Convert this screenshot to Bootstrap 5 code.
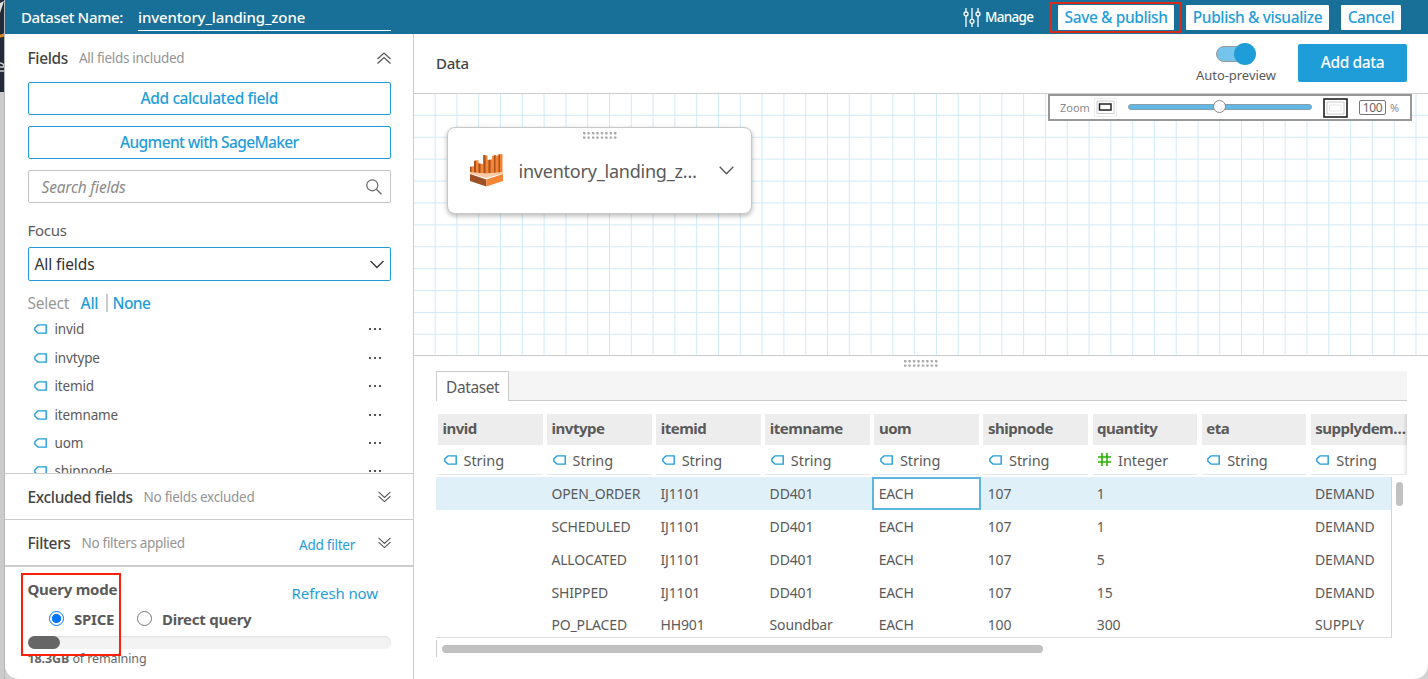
<!DOCTYPE html>
<html lang="en">
<head>
<meta charset="utf-8">
<meta name="viewport" content="width=device-width, initial-scale=1">
<title>Dataset</title>
<link href="https://cdn.jsdelivr.net/npm/bootstrap@5.3.0/dist/css/bootstrap.min.css" rel="stylesheet">
<style>
  :root { --blue: #1f9dd9; --line: #ccc; --ink: #444; --soft: #949494; }
  body { font-family: "Noto Sans", "Open Sans", sans-serif; font-size: 16px; line-height: 20px; letter-spacing: -.25px; color: #5a5a5a; background: #d2d2d2; height: 679px; overflow: hidden; }
  svg { display: block; flex: none; }
  .backdrop { width: 5px; height: 679px; background: #cbcbcb; overflow: hidden; border-right: 1px solid #b9b9b9; }
  .backdrop-top { height: 92px; background: #212a38; }
  .app { width: 1423px; height: 679px; background: #fff; border-radius: 0 0 14px 14px; overflow: hidden; }
  .topbar { height: 34px; background: #186f98; color: #fff; font-weight: 500; font-size: 15px; letter-spacing: -.35px; }
  .ds-name { width: 253px; height: 24px; border-bottom: 1px solid #fff; line-height: 21px; letter-spacing: -.13px; }
  .btn-top { height: 25px; background: #fff; color: var(--blue); border: 0; border-radius: 1px; padding: 0; font-size: 15.5px; font-weight: 500; line-height: 24px; letter-spacing: -.4px; }
  .btn-top:hover { background: #fff; color: var(--blue); }
  .marker { position: absolute; border: 2px solid #fb2009; pointer-events: none; }
  .side { width: 409px; border-right: 1px solid var(--line); }
  .sec { padding: 0 22px 0 22.5px; }
  .ttl { color: var(--ink); font-size: 15.5px; font-weight: 500; letter-spacing: -.35px; }
  .hint { color: var(--soft); font-size: 13.5px; letter-spacing: -.3px; margin-left: 11px; }
  .lnk { color: var(--blue); text-decoration: none; font-weight: 500; }
  .btn-line { height: 33px; border: 1px solid var(--blue); border-radius: 2px; color: var(--blue); padding: 0; font-size: 15.5px; font-weight: 500; line-height: 31px; letter-spacing: -.4px; }
  .btn-line.tight { letter-spacing: -.62px; }
  .box { height: 33px; border: 1px solid #c4c4c4; border-radius: 2px; }
  .field-list { height: 158px; overflow: hidden; }
  .field { height: 28.45px; font-size: 13.5px; letter-spacing: -.15px; }
  .dots { width: 13px; height: 2px; background: radial-gradient(circle at 1px 1px, #555 1px, transparent 1.3px) 0 0/5px 2px; }
  .bar-line { border-top: 1px solid var(--line); }
  .meter { height: 13px; border-radius: 7px; background: #f3f3f3; box-shadow: inset 0 1px 2px #ddd; }
  .meter-fill { height: 13px; border-radius: 7px; background: #666; }
  .radio { width: 15px; height: 15px; border-radius: 50%; border: 1px solid #777; background: #fff; }
  .radio.on { border: 1.5px solid #0075ff; background: radial-gradient(circle, #0075ff 4.2px, #fff 4.9px); }
  .data-head { height: 60px; border-bottom: 1px solid var(--line); }
  .switch-track { position: relative; width: 40px; height: 22px; }
  .switch-track::before { content: ""; position: absolute; left: 0; top: 3px; width: 36px; height: 16px; border-radius: 8px; border: 1px solid #989898; background: #74c4ec; }
  .switch-track::after { content: ""; position: absolute; right: 0; top: 0; width: 22px; height: 22px; border-radius: 50%; background: #1f9dd9; }
  .btn-add { width: 109px; height: 38px; background: #1f9dd9; color: #fff; border: 0; border-radius: 2px; font-weight: 500; padding: 0; font-size: 15.5px; letter-spacing: -.4px; }
  .canvas { position: relative; height: 262px; border-bottom: 1px solid var(--line);
    background: linear-gradient(to right, transparent 20.8px, #cfeaf8 20.8px) -.2px 0/21.8px 21.9px, linear-gradient(transparent 20.9px, #cfeaf8 20.9px) 0 0/21.8px 21.9px, #fff; }
  .zoombox { position: absolute; left: 634px; top: 0; width: 364px; height: 27px; border: 2px solid #979797; background: #fff; color: #8b8b8b; font-size: 11px; letter-spacing: 0; }
  .zslider { position: relative; width: 184px; height: 6px; border-radius: 3px; background: #5fb8e6; border: 1px solid #8a9da6; }
  .zslider::after { content: ""; position: absolute; left: 84px; top: -5px; width: 13px; height: 13px; border-radius: 50%; border: 1px solid #888; background: #fff; }
  .zval { width: 27px; height: 15px; border: 1px solid #777; border-radius: 2px; font-size: 12px; line-height: 14px; color: #666; text-align: center; letter-spacing: -.3px; }
  .node { position: absolute; left: 33px; top: 33px; width: 305px; height: 87px; border: 1px solid #c8c8c8; border-radius: 8px; background: #fff; box-shadow: 0 2px 5px rgba(0,0,0,.28); }
  .grip { width: 34px; height: 7px; background: radial-gradient(circle at 1.2px 1.2px, #a8a8a8 1.1px, transparent 1.4px) 0 0/4.45px 4.5px; }
  .node-name { font-size: 18px; letter-spacing: -.22px; }
  .tabs { height: 30px; background: #f5f5f5; border-bottom: 1px solid var(--line); margin: 0 21px 0 22px; }
  .tab-on { width: 73px; height: 30px; background: #fff; border: 1px solid var(--line); border-bottom: 0; line-height: 30px; letter-spacing: -.4px; font-size: 15.5px; padding-left: 9px; }
  .grid-head { margin: 13px 21px 0 24px; width: 969px; height: 61px; overflow: hidden; position: relative; }
  .grid-head::after { content: ""; position: absolute; right: 0; top: 0; width: 4px; height: 60px; background: linear-gradient(to right, transparent, rgba(0,0,0,.1)); }
  .cols { display: grid; grid-template-columns: repeat(9, 104.6px); column-gap: 4.5px; }
  .th-name { height: 31px; background: #ededed; padding-left: 4.5px; line-height: 28px; font-weight: 700; font-size: 15px; letter-spacing: -.48px; white-space: nowrap; }
  .th-type { height: 30px; border-bottom: 1px solid #e8e8e8; padding-left: 5.5px; font-size: 14.5px; letter-spacing: -.05px; }
  .rows { margin: 2px 0 0 22px; width: 956px; height: 161px; border-right: 1px solid #d5d5d5; border-bottom: 1px solid #ddd; overflow: hidden; }
  .dr { height: 32.8px; padding-left: 2px; font-size: 14px; letter-spacing: -.15px; }
  .dr > div { padding-left: 4.3px; line-height: 33px; white-space: nowrap; }
  .dr.sel { background: #e0f0f9; height: 33px; }
  .dr.sel > .cell-on { outline: 2px solid #5bb5e0; outline-offset: -2px; background: #fff; margin: 0 -2px; padding-left: 6.3px; }
</style>
</head>
<body>
<div class="d-flex">
  <div class="backdrop">
    <div class="backdrop-top">
      <svg width="5" height="92"><path d="M0 3L4 1 0 13z" fill="#ddd"/><path d="M0 36Q3 36 5 34" stroke="#e08a1e" stroke-width="3" fill="none"/><path d="M0 67h4M4 67q0-4-4-4M0 71h4" stroke="#ccc" stroke-width="1.5" fill="none"/></svg>
    </div>
  </div>
  <div class="app d-flex flex-column position-relative">
    <header class="topbar d-flex align-items-center">
      <div style="margin-left:16px;width:117px">Dataset Name:</div>
      <div class="ds-name mt-1">inventory_landing_zone</div>
      <div class="ms-auto d-flex align-items-center">
        <svg width="18" height="19" viewBox="0 0 18 19" fill="none" stroke="#fff" stroke-width="1.3"><path d="M3 0v4M3 8v11M9 0v11M9 15.500v3.500M15 0v4M15 8v11"/><circle cx="3" cy="6" r="2"/><circle cx="9" cy="13.300" r="2"/><circle cx="15" cy="6" r="2"/></svg>
        <span style="margin-left:4px;width:73px;font-size:13.500px;letter-spacing:-.7px">Manage</span>
        <button class="btn btn-top" style="width:116px;margin-right:12px">Save &amp; publish</button>
        <button class="btn btn-top" style="width:143px;margin-right:12px">Publish &amp; visualize</button>
        <button class="btn btn-top" style="width:60px;margin-right:27px">Cancel</button>
      </div>
    </header>
    <div class="d-flex flex-grow-1">
      <aside class="side">
        <div class="sec">
          <div class="d-flex align-items-center" style="height:48px">
            <span class="ttl">Fields</span><span class="hint">All fields included</span>
            <svg class="ms-auto" width="14" height="12" viewBox="0 0 14 12" fill="none" stroke="#555" stroke-width="1.2"><path d="M.5 7L7 1l6.500 6M.5 11.500L7 5.500l6.500 6"/></svg>
          </div>
          <button class="btn btn-line w-100 d-block">Add calculated field</button>
          <button class="btn btn-line tight w-100 d-block" style="margin-top:11px">Augment with SageMaker</button>
          <div class="box d-flex align-items-center" style="margin-top:11px;padding:0 8px 0 13px">
            <span class="fst-italic" style="color:#8b8b8b;font-size:15.500px;letter-spacing:-.2px">Search fields</span>
            <svg class="ms-auto" width="16" height="16" viewBox="0 0 16 16" fill="none" stroke="#666" stroke-width="1.200"><circle cx="6.300" cy="6.300" r="5.500"/><path d="M10.300 10.300L15.500 15.300"/></svg>
          </div>
          <div style="margin-top:17px;font-size:15px">Focus</div>
          <div class="box d-flex align-items-center" style="margin-top:7px;height:34px;border-color:var(--blue);padding:0 6px;color:#333;font-size:15.5px">
            <span style="letter-spacing:-.1px">All fields</span>
            <svg class="ms-auto" width="14" height="9" viewBox="0 0 14 9" fill="none" stroke="#333" stroke-width="1.300"><path d="M.5 1L7 7.500 13.500 1"/></svg>
          </div>
          <div class="d-flex align-items-center" style="margin-top:12px;height:20px;font-size:15.5px">
            <span style="color:#999;width:53px">Select</span><a class="lnk" href="#" style="width:25px">All</a><span style="width:7px;height:18px;border-left:2px solid #ccc"></span><a class="lnk" href="#" style="letter-spacing:-.6px">None</a>
          </div>
          <div class="field-list" id="fields" style="margin-top:2px"></div>
        </div>
        <div class="sec bar-line d-flex align-items-center" style="height:46px">
          <span class="ttl">Excluded fields</span><span class="hint">No fields excluded</span>
          <svg class="ms-auto" width="13" height="11" viewBox="0 0 14 12" fill="none" stroke="#555" stroke-width="1.2"><path d="M.5 1L7 7l6.500-6M.5 5.500L7 11.500l6.500-6"/></svg>
        </div>
        <div class="sec bar-line d-flex align-items-center" style="height:46px">
          <span class="ttl">Filters</span><span class="hint">No filters applied</span>
          <a class="lnk ms-auto" href="#" style="font-size:13.500px;margin-right:23px;padding-top:4px;font-weight:400">Add filter</a>
          <svg width="13" height="11" viewBox="0 0 14 12" fill="none" stroke="#555" stroke-width="1.2"><path d="M.5 1L7 7l6.500-6M.5 5.500L7 11.500l6.500-6"/></svg>
        </div>
        <div class="sec" style="border-top:2px solid #ccc;padding-top:12px">
          <div class="d-flex fw-bold" style="font-size:15px"><span>Query mode</span><a class="lnk ms-auto" href="#" style="font-weight:400;margin:4px 13px 0 0;font-size:15px;letter-spacing:-.1px">Refresh now</a></div>
          <div class="d-flex align-items-center fw-bold" style="margin-top:4px;height:22px;padding-left:21.500px;font-size:15px">
            <span class="radio on"></span><span style="margin-left:10px;width:63px;padding-top:2px">SPICE</span>
            <span class="radio"></span><span style="margin-left:10px;padding-top:2px">Direct query</span>
          </div>
          <div class="meter" style="margin-top:7px"><div class="meter-fill" style="width:9%"></div></div>
          <div style="font-size:12.500px;line-height:19px;letter-spacing:-.1px;color:#666"><b>18.3GB</b> of remaining</div>
        </div>
      </aside>
      <main class="flex-grow-1">
        <div class="data-head d-flex align-items-center">
          <span style="margin-left:22px;color:#444;font-weight:500;font-size:15px;margin-top:-1px">Data</span>
          <div class="ms-auto d-flex flex-column align-items-center" style="width:84px;margin-right:20px;padding-top:2px">
            <div class="switch-track"></div><div style="font-size:13px;letter-spacing:-.05px;line-height:21px">Auto-preview</div>
          </div>
          <button class="btn btn-add" style="margin:-1px 21px 0 0">Add data</button>
        </div>
        <div class="canvas">
          <div class="node">
            <div class="d-flex justify-content-center" style="padding-top:4px"><div class="grip"></div></div>
            <div class="d-flex align-items-center" style="padding:13px 17px 0 22px;height:50px">
              <svg width="33" height="33" viewBox="0 0 33 33"><path d="M0 13l4-1V7l4.500-1v3l4.500 1V1l4.500.5V6l4.500-.5V2l4-1 .5 1L29 .5l3.500-.5v19l-16.500 1L0 19z" fill="#f58534"/><path d="M0 13l1.500-.5V19H0zM4 7l2-.5V19H4zM8.500 9.500l2 .5v9.500h-2zM13.500 1l2 .5v18h-2zM18.500 6l2-.5V19h-2zM24 1.500l1.500-.5V19H24zM28.500.5L30 .3V19h-1.500z" fill="#a7501f"/><path d="M0 19.500L16.300 24 33 19.500V18l-16.700 1.500L0 18z" fill="#fbc9a4"/><path d="M0 20l16.300 5.500V32.500L0 27z" fill="#9d5025"/><path d="M33 20l-16.700 5.500V32.500L33 27z" fill="#f58534"/></svg>
              <span class="node-name" style="margin-left:15.500px">inventory_landing_z…</span>
              <svg class="ms-auto" width="15" height="9" viewBox="0 0 15 9" fill="none" stroke="#555" stroke-width="1.300"><path d="M.7.8l6.800 7 6.800-7"/></svg>
            </div>
          </div>
          <div class="zoombox d-flex align-items-center">
            <span style="margin-left:10px;width:34px">Zoom</span>
            <svg width="23" height="19" viewBox="0 0 23 19" fill="none"><path d="M.5.500h22v18H.5z" stroke="#eee"/><path d="M3 3h17v12.500H3z" stroke="#ccc"/><path d="M5.500 6h11.500v6H5.500z" stroke="#222" stroke-width="1.500"/></svg>
            <div class="zslider" style="margin-left:11px;margin-bottom:1px"></div>
            <svg style="margin-left:11px" width="25" height="20" viewBox="0 0 25 20" fill="none"><path d="M1 1h23v18H1z" stroke="#111" stroke-width="1.500"/><path d="M4 4h17v12H4z" stroke="#ccc"/><path d="M6.500 7h11.500v6H6.500z" stroke="#e5e5e5"/></svg>
            <span class="zval" style="margin-left:11px">100</span><span style="margin-left:4px">%</span>
          </div>
        </div>
        <div class="d-flex justify-content-center" style="padding-top:4px;height:15px"><div class="grip"></div></div>
        <div class="tabs"><div class="tab-on">Dataset</div></div>
        <div class="grid-head"><div class="cols" id="head"></div></div>
        <div class="rows" id="rows"></div>
        <div style="margin:2px 0 0 22px;padding:5px 0 0 5px;height:17px;border-left:1px solid #ccc"><div style="width:601px;height:8px;border-radius:4px;background:#c1c1c1"></div></div>
      </main>
    </div>
    <div style="position:absolute;left:1391px;top:482px;width:7px;height:24px;border-radius:4px;background:#c1c1c1"></div>
    <div class="marker" style="left:16px;top:573px;width:100px;height:83px"></div>
    <div class="marker" style="left:1045px;top:2px;width:131px;height:31px;border-color:#d92b17"></div>
  </div>
</div>
<script>
  const tag = '<svg width="13" height="10" viewBox="0 0 13 10" fill="none" stroke="#1f9dd9" stroke-width="1.4"><path d="M4 .900h8.200v8.200H4L.900 6.300V3.700z"/></svg>';
  const hash = '<svg width="13" height="13" viewBox="0 0 13 13" fill="none" stroke="#2bb000" stroke-width="1.600"><path d="M4 0v13M9 0v13M0 4h13M0 9h13"/></svg>';
  document.getElementById('fields').innerHTML = ['invid', 'invtype', 'itemid', 'itemname', 'uom', 'shipnode'].map(n =>
    `<div class="field d-flex align-items-center" style="padding:0 9px 0 6px">${tag}<span style="margin-left:8px">${n}</span><span class="dots ms-auto"></span></div>`).join('');
  const cols = ['invid', 'invtype', 'itemid', 'itemname', 'uom', 'shipnode', 'quantity', 'eta', 'supplydem…'];
  document.getElementById('head').innerHTML = cols.map(c =>
    `<div><div class="th-name">${c}</div><div class="th-type d-flex align-items-center">${c === 'quantity' ? hash : tag}<span style="margin-left:7px">${c === 'quantity' ? 'Integer' : 'String'}</span></div></div>`).join('');
  const data = [
    ['', 'OPEN_ORDER', 'IJ1101', 'DD401', 'EACH', '107', '1', '', 'DEMAND'],
    ['', 'SCHEDULED', 'IJ1101', 'DD401', 'EACH', '107', '1', '', 'DEMAND'],
    ['', 'ALLOCATED', 'IJ1101', 'DD401', 'EACH', '107', '5', '', 'DEMAND'],
    ['', 'SHIPPED', 'IJ1101', 'DD401', 'EACH', '107', '15', '', 'DEMAND'],
    ['', 'PO_PLACED', 'HH901', 'Soundbar', 'EACH', '100', '300', '', 'SUPPLY']];
  document.getElementById('rows').innerHTML = data.map((r, i) =>
    `<div class="dr cols ${i ? '' : 'sel'}">${r.map((v, j) => `<div class="${!i && j === 4 ? 'cell-on' : ''}">${v}</div>`).join('')}</div>`).join('');
</script>
<script src="https://cdn.jsdelivr.net/npm/bootstrap@5.3.0/dist/js/bootstrap.bundle.min.js"></script>
</body>
</html>
